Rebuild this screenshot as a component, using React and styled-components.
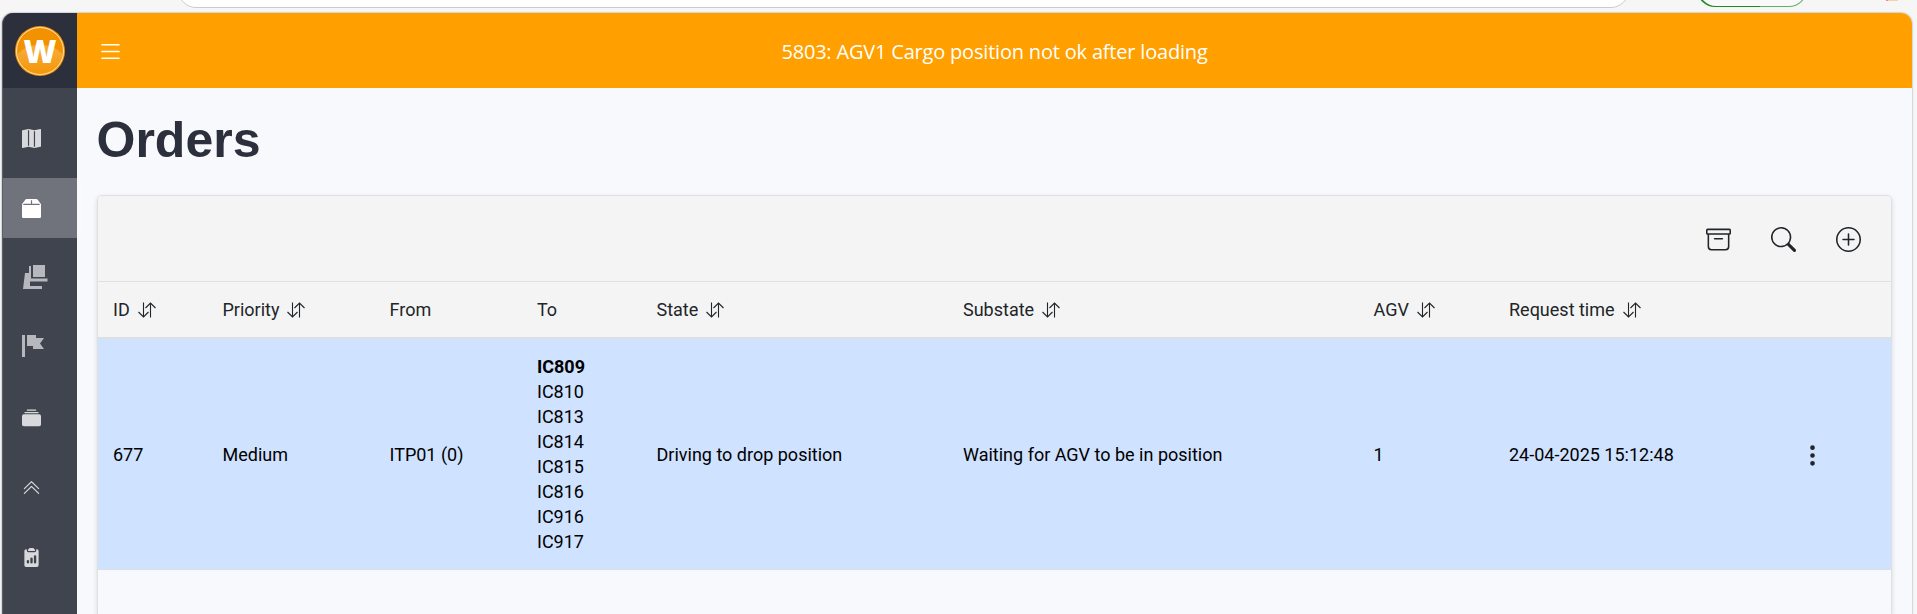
import React from 'react';
import styled, { createGlobalStyle } from 'styled-components';
import { BsMapFill, BsBox2Fill, BsCollectionFill, BsChevronDoubleUp, BsClipboard2DataFill, BsArchive, BsSearch, BsPlusCircle, BsList, BsThreeDotsVertical } from 'react-icons/bs';

const Global = createGlobalStyle`
  * { box-sizing: border-box; }
  body { margin: 0; background: #f6f6f6; overflow: hidden; }
`;
const Page = styled.div`
  height: 614px;
  overflow: hidden;
  font-family: Roboto, sans-serif;
  color: #000;
`;
const BrowserStrip = styled.div`
  height: 13px;
  display: flex;
  overflow: hidden;
  padding-left: 178px;
`;
const AddressBar = styled.div`
  width: 1451px;
  height: 40px;
  margin-top: -32px;
  border: 1px solid #cbcbcb;
  border-radius: 18px;
  background: #fff;
`;
const UpdatePill = styled.div`
  width: 110px;
  height: 36px;
  margin: -29px 0 0 68px;
  padding: 0 1.5px 1.5px;
  border-radius: 18px;
  background: linear-gradient(90deg, #1d8a24 63px, #62b067 63px);
  &::after {
    content: '';
    display: block;
    height: 100%;
    border-radius: 17px;
    background: #f9f9f9;
  }
`;
const Extension = styled.div`
  width: 12px;
  height: 1px;
  margin-left: 79px;
  background: linear-gradient(90deg, #f28b82 2px, #fbd0a0 2px);
`;
const Window = styled.div`
  display: flex;
  width: 1910px;
  height: 601px;
  margin-left: 2px;
  border-radius: 11px 11px 0 0;
  background: #f8f9fd;
  box-shadow: 0 0 1px 1px #d3d4d8;
`;
const Sidebar = styled.nav`
  width: 75px;
  flex: none;
  background: #40444f;
  border-top-left-radius: 11px;
  border-left: 1px solid #5d6069;
`;
const LogoBox = styled.div`
  height: 75px;
  display: flex;
  align-items: center;
  justify-content: center;
  background: #2c303d;
  border-top-left-radius: 11px;
`;
const NavList = styled.div`
  display: flex;
  flex-direction: column;
  gap: 10px;
  padding-top: 20px;
`;
const NavItem = styled.a`
  position: relative;
  display: flex;
  align-items: center;
  height: 60px;
  width: ${(p) => (p.$active ? 79 : 74)}px;
  padding-left: ${(p) => p.$inset || 18.5}px;
  padding-bottom: ${(p) => p.$lift || 0}px;
  color: ${(p) => (p.$active ? '#fff' : p.$dim ? '#b6b8bd' : '#d8d9dc')};
  background: ${(p) => (p.$active ? 'rgba(255,255,255,.25)' : 'none')};
`;
const Main = styled.main`
  flex: 1;
  display: flex;
  flex-direction: column;
  min-width: 0;
`;
const TopBar = styled.header`
  display: flex;
  align-items: center;
  height: 75px;
  flex: none;
  padding: 1px 20px 0;
  color: #fff;
  background: #ffa000;
  border-top-right-radius: 11px;
`;
const MenuButton = styled.div`
  display: flex;
  width: 27px;
`;
const Alert = styled.div`
  flex: 1;
  padding: 1px 27px 0 0;
  text-align: center;
  font: 20px/27px 'Open Sans', 'Noto Sans', sans-serif;
  letter-spacing: -0.19px;
`;
const Title = styled.h1`
  margin: 22px 0 0 19.5px;
  font: bold 50px/60px 'Liberation Sans', Arial, sans-serif;
  color: #2c303d;
`;
const Card = styled.section`
  flex: 1;
  margin: 25px 20px 0;
  border: 1px solid #dfe0e2;
  border-bottom: 0;
  border-radius: 5px 5px 0 0;
  box-shadow: 0 2px 5px rgba(0, 0, 0, 0.13);
  overflow: hidden;
`;
const Toolbar = styled.div`
  display: flex;
  align-items: center;
  justify-content: flex-end;
  gap: 40px;
  height: 86px;
  padding: 1px 30px 0 0;
  color: #212529;
  background: #f4f4f4;
  border-bottom: 1px solid #dee0e2;
`;
const Row = styled.div`
  display: grid;
  grid-template-columns: 109.5px 167px 147.5px 119.5px 306.5px 410.5px 135.5px 1fr 91px;
  align-items: center;
  padding-left: 15px;
  font-size: 18px;
  line-height: 25px;
`;
const HeadRow = styled(Row)`
  height: 57px;
  color: #212529;
  background: #f4f4f4;
  border-bottom: 2px solid #dedfe1;
`;
const OrderRow = styled(Row)`
  height: 231px;
  background: #cfe2ff;
  border-bottom: 1px solid #dbdee3;
`;
const HeadCell = styled.div`
  display: flex;
  align-items: center;
  gap: 8px;
`;
const Destination = styled.div`
  font-weight: ${(p) => (p.$current ? 700 : 400)};
`;
const More = styled.div`
  display: flex;
  padding-top: 2px;
  color: #212529;
`;

const Logo = () => (
  <svg width="50" height="50" viewBox="0 0 50 50">
    <defs>
      <linearGradient id="shine" x1="0" y1="0" x2="0" y2="1">
        <stop offset="0" stopColor="#f7ae3e" />
        <stop offset="1" stopColor="#f39200" />
      </linearGradient>
      <clipPath id="disc"><circle cx="25" cy="25" r="23" /></clipPath>
    </defs>
    <circle cx="25" cy="25" r="25" fill="#f39200" />
    <ellipse cx="25" cy="36" rx="25" ry="17" fill="url(#shine)" clipPath="url(#disc)" />
    <circle cx="25" cy="25" r="23.5" fill="none" stroke="#fde2b5" strokeWidth="1" />
    <text x="25" y="37" textAnchor="middle" fontFamily="Open Sans, sans-serif" fontWeight="800" fontSize="31" fill="#fff" textLength="33" lengthAdjust="spacingAndGlyphs">W</text>
  </svg>
);
const VehicleIcon = () => (
  <svg width="25" height="25" viewBox="0 0 25 25" fill="currentColor">
    <path d="M10 0h12v12H10zM6 1h2v12.500h16.500v3H7V21h12v3H0L2 8h4z" />
  </svg>
);
const FlagIcon = () => (
  <svg width="23" height="23" viewBox="0 0 23 23" fill="currentColor">
    <path d="M0 0h3v22H0zM5 0h9v3h8l-4 5.500 4 5.500H11v-3H5z" />
  </svg>
);
const SortIcon = () => (
  <svg width="18" height="16" viewBox="0 0 18 16" fill="none" stroke="currentColor" strokeWidth="1.100">
    <path d="M5.500 .5v14.500M.5 10l5 5 5-5M12.500 15.500V1M7.500 6l5-5 5 5" />
  </svg>
);

const columns = [
  ['ID', true], ['Priority', true], ['From', false], ['To', false], ['State', true],
  ['Substate', true], ['AGV', true], ['Request time', true],
];
const destinations = ['IC809', 'IC810', 'IC813', 'IC814', 'IC815', 'IC816', 'IC916', 'IC917'];

export default function App() {
  return (
    <Page>
      <Global />
      <BrowserStrip>
        <AddressBar />
        <UpdatePill />
        <Extension />
      </BrowserStrip>
      <Window>
        <Sidebar>
          <LogoBox><Logo /></LogoBox>
          <NavList>
            <NavItem><BsMapFill size={19} /></NavItem>
            <NavItem $active><BsBox2Fill size={19} /></NavItem>
            <NavItem $dim $inset={20} $lift={2}><VehicleIcon /></NavItem>
            <NavItem $dim $inset={19} $lift={3}><FlagIcon /></NavItem>
            <NavItem><BsCollectionFill size={19} /></NavItem>
            <NavItem $lift={1}><BsChevronDoubleUp size={19} /></NavItem>
            <NavItem $lift={1}><BsClipboard2DataFill size={19} /></NavItem>
          </NavList>
        </Sidebar>
        <Main>
          <TopBar>
            <MenuButton><BsList size={27} /></MenuButton>
            <Alert>5803: AGV1 Cargo position not ok after loading</Alert>
          </TopBar>
          <Title>Orders</Title>
          <Card>
            <Toolbar>
              <BsArchive size={25} />
              <BsSearch size={25} />
              <BsPlusCircle size={25} />
            </Toolbar>
            <HeadRow>
              {columns.map(([label, sortable]) => (
                <HeadCell key={label}>{label}{sortable && <SortIcon />}</HeadCell>
              ))}
            </HeadRow>
            <OrderRow>
              <div>677</div>
              <div>Medium</div>
              <div>ITP01 (0)</div>
              <div>
                {destinations.map((d, i) => <Destination key={d} $current={i === 0}>{d}</Destination>)}
              </div>
              <div>Driving to drop position</div>
              <div>Waiting for AGV to be in position</div>
              <div>1</div>
              <div>24-04-2025 15:12:48</div>
              <More><BsThreeDotsVertical size={25} /></More>
            </OrderRow>
          </Card>
        </Main>
      </Window>
    </Page>
  );
}
